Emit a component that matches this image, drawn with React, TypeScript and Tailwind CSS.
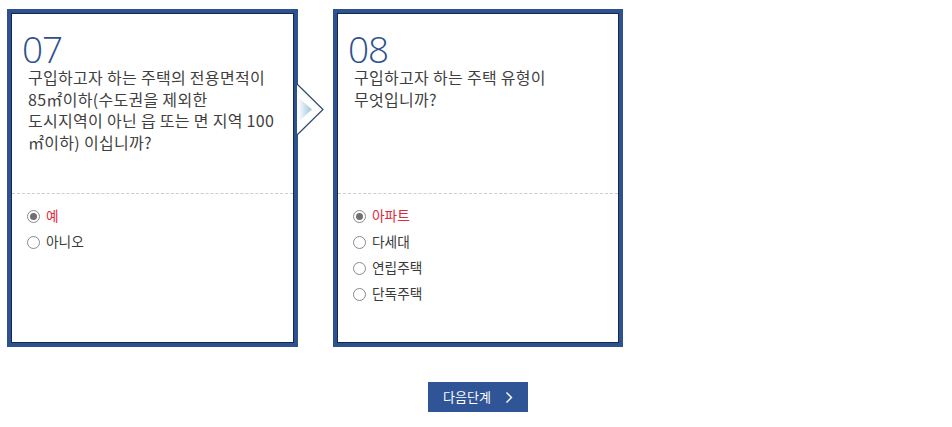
import React from "react";

const KR = { fontFamily: '"Noto Sans CJK KR", "Noto Sans", sans-serif' };

function Radio({ label, checked }: { label: string; checked?: boolean }) {
  return (
    <div className="flex items-center h-[26px]">
      <span className="w-[13px] h-[13px] rounded-full border border-[#8a8a8a] bg-white flex items-center justify-center shrink-0">
        {checked && <span className="w-[7px] h-[7px] rounded-full bg-[#707070]" />}
      </span>
      <span className={`ml-[6px] text-[13.7px] leading-none ${checked ? "text-[#e0283c]" : "text-[#3a3a3a]"}`}>{label}</span>
    </div>
  );
}

function Card({
  num,
  lines,
  options,
  width,
  arrow,
}: {
  num: string;
  lines: string[];
  options: { label: string; checked?: boolean }[];
  width: string;
  arrow?: boolean;
}) {
  return (
    <div className={`relative h-[338px] ${width} border-4 border-[#2e5190]`}>
      <div className="h-full border border-[#12284d] bg-white flex flex-col">
        <div className="h-[180px] border-b border-dashed border-[#cccccc] pl-[10px]">
          <div
            className="text-[37px] leading-none font-light text-[#2e5190] mt-[16px] tracking-[-1px]"
            style={{ fontFamily: '"Open Sans", sans-serif' }}
          >
            {num}
          </div>
          <div className="pl-[6px] mt-[0px] text-[16px] tracking-[0.3px] leading-[21.7px] text-[#3f3f3f]" style={KR}>
            {lines.map((l, i) => (
              <div key={i} className="whitespace-nowrap">{l}</div>
            ))}
          </div>
        </div>
        <div className="pl-[15px] pt-[9px]" style={KR}>
          {options.map((o, i) => (
            <Radio key={i} label={o.label} checked={o.checked} />
          ))}
        </div>
      </div>
      {arrow && (
        <svg className="absolute left-[279px] top-[67px]" width="36" height="60" viewBox="0 0 36 60">
          <defs>
            <linearGradient id="ag" x1="0" y1="0" x2="1" y2="0">
              <stop offset="0" stopColor="#ffffff" />
              <stop offset="1" stopColor="#9ec2de" />
            </linearGradient>
          </defs>
          <polygon points="7,4 33,29.5 7,55" fill="#ffffff" />
          <polyline points="7,4 33,29.5 7,55" fill="none" stroke="#34476a" strokeWidth="1.2" />
          <polygon points="8,17 22,29.5 8,42" fill="url(#ag)" />
        </svg>
      )}
    </div>
  );
}

export default function App() {
  return (
    <div className="w-[952px] h-[427px] bg-white overflow-hidden" style={KR}>
      <div className="flex gap-[35px] pl-[7px] pt-[9px]">
        <Card
          num="07"
          width="w-[291px]"
          arrow
          lines={[
            "구입하고자 하는 주택의 전용면적이",
            "85㎡이하(수도권을 제외한",
            "도시지역이 아닌 읍 또는 면 지역 100",
            "㎡이하) 이십니까?",
          ]}
          options={[{ label: "예", checked: true }, { label: "아니오" }]}
        />
        <Card
          num="08"
          width="w-[290px]"
          lines={["구입하고자 하는 주택 유형이", "무엇입니까?"]}
          options={[
            { label: "아파트", checked: true },
            { label: "다세대" },
            { label: "연립주택" },
            { label: "단독주택" },
          ]}
        />
      </div>
      <div className="flex justify-center pl-[4px] mt-[35px]">
        <button className="w-[100px] h-[30px] bg-[#2f5597] text-white text-[13px] flex items-center justify-center gap-[14px]" style={KR}>
          <span>다음단계</span>
          <svg width="8" height="13" viewBox="0 0 8 13">
            <polyline points="1.5,1.5 6.5,6.5 1.5,11.5" fill="none" stroke="#ffffff" strokeWidth="1.4" />
          </svg>
        </button>
      </div>
    </div>
  );
}
